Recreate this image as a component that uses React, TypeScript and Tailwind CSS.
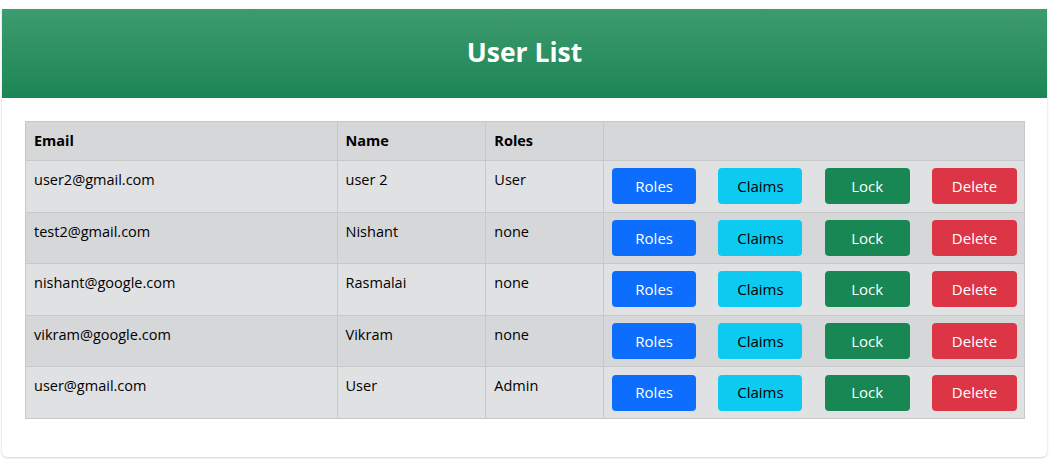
import React from "react";

const rows = [
  { email: "user2@gmail.com", name: "user 2", roles: "User" },
  { email: "test2@gmail.com", name: "Nishant", roles: "none" },
  { email: "nishant@google.com", name: "Rasmalai", roles: "none" },
  { email: "vikram@google.com", name: "Vikram", roles: "none" },
  { email: "user@gmail.com", name: "User", roles: "Admin" },
];

export default function App() {
  return (
    <div
      className="w-[1049px] h-[459px] bg-white pt-[9px] px-[2px] overflow-hidden"
      style={{ fontFamily: '"Open Sans", "Noto Sans", sans-serif' }}
    >
      <div className="h-[448px] bg-white rounded-b-[6px] shadow-[0_1px_3px_rgba(0,0,0,0.18)] flex flex-col">
        <div className="h-[89px] bg-gradient-to-b from-[#3c9b6f] to-[#1b8655] flex items-center justify-center">
          <h1 className="text-white font-bold text-[26.5px] leading-none pb-[2px]">User List</h1>
        </div>
        <div className="px-[23px] pt-[23px]">
          <table className="w-[1000px] border-collapse text-[14.5px] text-black">
            <colgroup>
              <col className="w-[312px]" />
              <col className="w-[149px]" />
              <col className="w-[118px]" />
              <col className="w-[421px]" />
            </colgroup>
            <thead>
              <tr className="bg-[#d6d7d9]">
                <th className="border border-[#c7c8ca] text-left font-bold px-2 h-[39px] py-0">Email</th>
                <th className="border border-[#c7c8ca] text-left font-bold px-2 py-0">Name</th>
                <th className="border border-[#c7c8ca] text-left font-bold px-2 py-0">Roles</th>
                <th className="border border-[#c7c8ca] px-2 py-0"></th>
              </tr>
            </thead>
            <tbody>
              {rows.map((r, i) => (
                <tr key={i} className={i % 2 === 0 ? "bg-[#e0e1e3]" : "bg-[#d6d7d9]"}>
                  <td className="border border-[#c7c8ca] px-2 pt-[8px] align-top h-[51.6px]">{r.email}</td>
                  <td className="border border-[#c7c8ca] px-2 pt-[8px] align-top">{r.name}</td>
                  <td className="border border-[#c7c8ca] px-2 pt-[8px] align-top">{r.roles}</td>
                  <td className="border border-[#c7c8ca] pl-[8px] pr-[7px] py-0 align-middle">
                    <div className="flex justify-between">
                      <button className="w-[84px] h-[36px] rounded-[4px] bg-[#0d6efd] text-white text-[15px]">Roles</button>
                      <button className="w-[84px] h-[36px] rounded-[4px] bg-[#0dcaf0] text-black text-[15px]">Claims</button>
                      <button className="w-[85px] h-[36px] rounded-[4px] bg-[#198754] text-white text-[15px]">Lock</button>
                      <button className="w-[85px] h-[36px] rounded-[4px] bg-[#dc3545] text-white text-[15px]">Delete</button>
                    </div>
                  </td>
                </tr>
              ))}
            </tbody>
          </table>
        </div>
      </div>
    </div>
  );
}
